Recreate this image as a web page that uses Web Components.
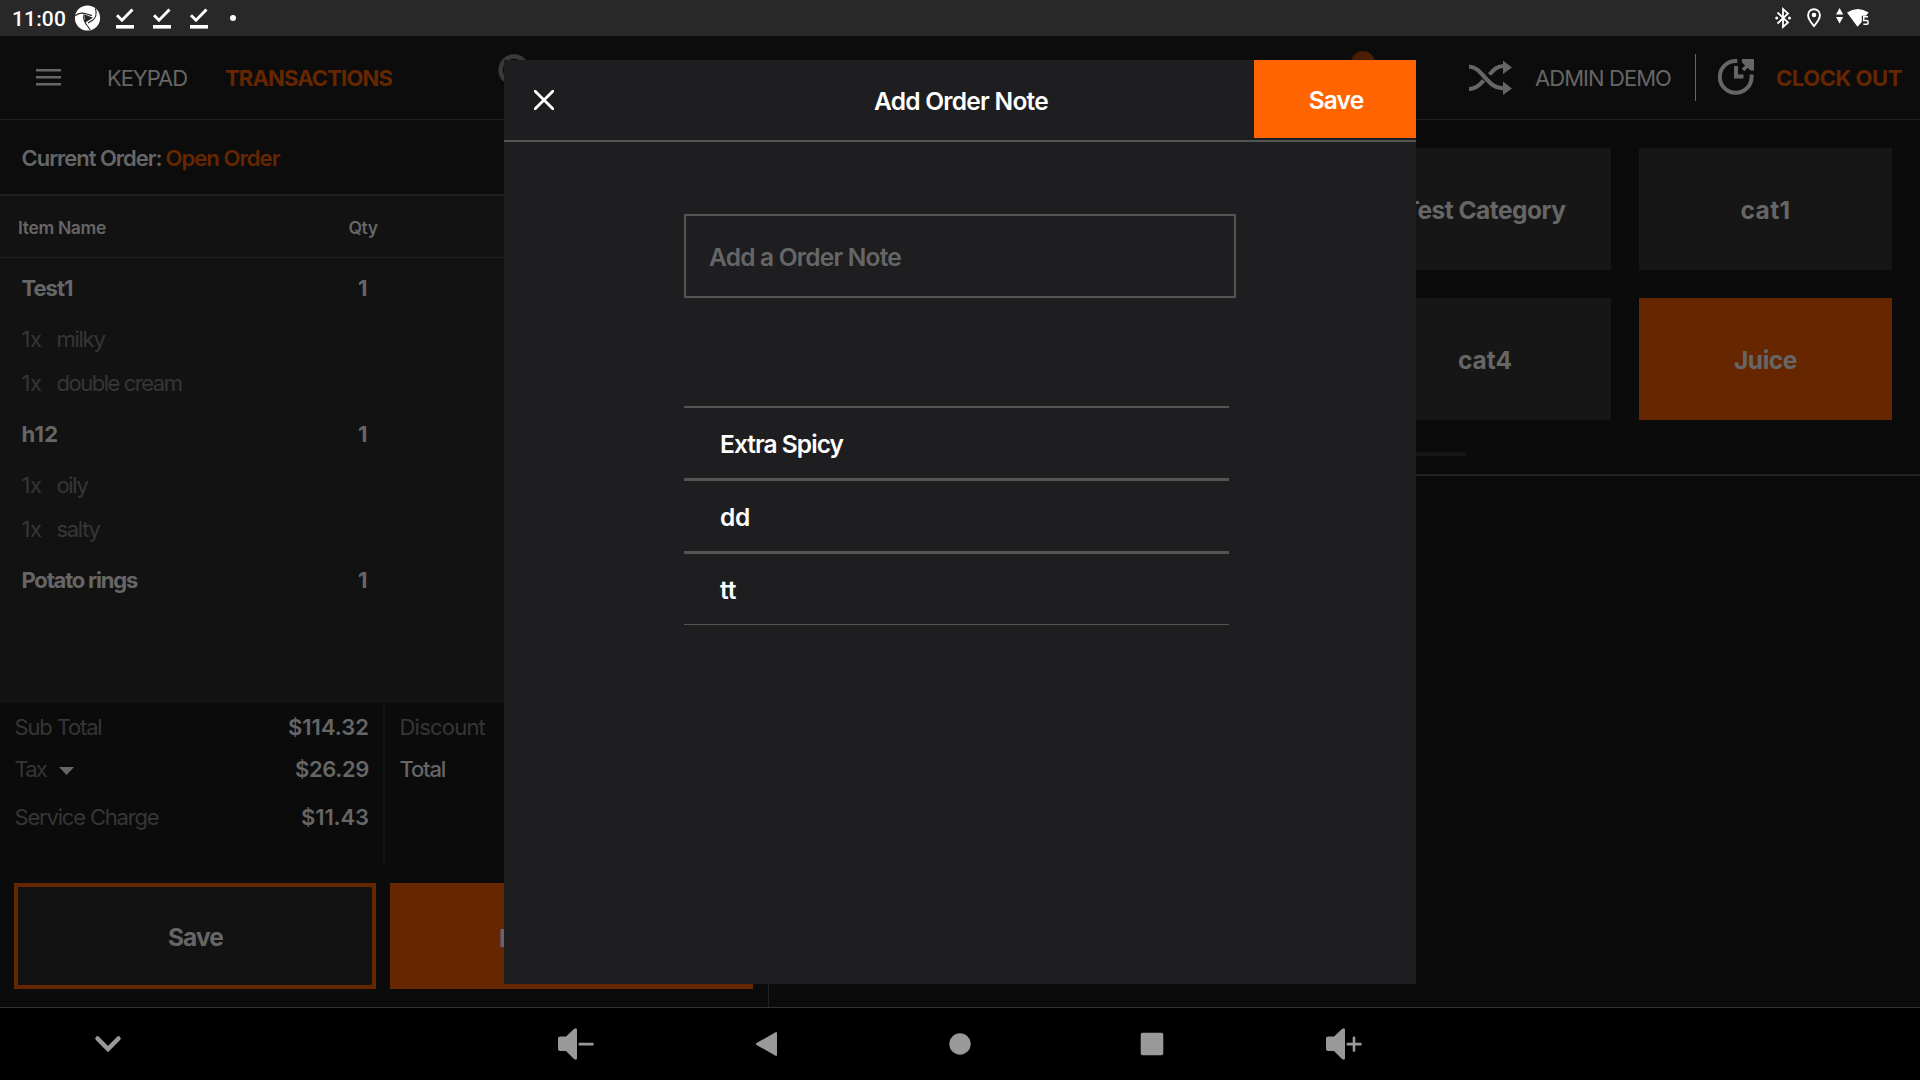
<!DOCTYPE html>
<html lang="en">
<head>
<meta charset="utf-8">
<title>Point of Sale</title>
<style>
html,body{margin:0;background:#000}
body{width:1920px;height:1080px;overflow:hidden;font-family:Inter,"Liberation Sans",sans-serif;font-size:22px;color:#666}
</style>
</head>
<body>
<pos-app></pos-app>
<script>
const define=(name,html,setup)=>{
  const t=document.createElement('template');
  t.innerHTML=html;
  customElements.define(name,class extends HTMLElement{
    connectedCallback(){
      if(this.shadowRoot)return;
      this.attachShadow({mode:'open'}).append(t.content.cloneNode(true));
      if(setup)setup(this,this.shadowRoot);
    }
  });
};

/* Single-line label whose tracking is tuned so that it spans a given advance width. */
define('fit-text','<style>:host{display:inline-block;white-space:pre;line-height:1.2;flex:none}span{display:inline-block}</style><span><slot></slot></span>',(el,root)=>{
  const w=parseFloat(el.getAttribute('w'));
  if(!w)return;
  const s=root.querySelector('span'),n=el.textContent.length;
  const ls=(w-s.getBoundingClientRect().width)/n;
  s.style.letterSpacing=ls.toFixed(3)+'px';
});

define('status-bar',`<style>
:host{display:flex;align-items:center;height:36px;background:#282828;color:#fff;box-sizing:border-box;padding-left:12px;font:500 21px Roboto,sans-serif}
.gap{flex:1}svg{display:block;flex:none}fit-text{padding-top:3px}
</style>
<fit-text w="54">11:00</fit-text>
<svg width="170" height="36" viewBox="66 0 170 36" fill="#fff">
<circle cx="87.5" cy="18" r="12.6"/>
<g fill="none" stroke="#282828" stroke-width="1.1"><path d="M75.2 15.800C78 13 82 12.600 86 13.800L92 15.600"/><path d="M95.400 8.500c1.500 5 .6 9-2.400 11.500l-5 3"/><path d="M83.800 14.500c-.8 4.500.8 8.500 4.500 12.500l2 3.300"/></g>
<path d="M84.300 14.200l8.700 3.600-8 5z" fill="#282828"/>
<g id="c"><path d="M117 15.200l5 5 10.500-10.800" fill="none" stroke="#fff" stroke-width="2.900"/><rect x="116" y="25" width="18" height="3.600"/></g>
<use href="#c" x="37"/><use href="#c" x="74"/>
<circle cx="233" cy="18" r="3"/>
</svg>
<span class="gap"></span>
<svg width="150" height="36" viewBox="1770 0 150 36" fill="#fff">
<path d="M1777.500 12.500l10.500 10-5 4.500V9l5 4.500-10.500 10" fill="none" stroke="#fff" stroke-width="1.800"/>
<circle cx="1776.700" cy="18" r="1.500"/><circle cx="1789.500" cy="18" r="1.500"/>
<path d="M1814 9.200a5.900 5.900 0 0 0-5.900 5.900c0 4.400 5.900 11 5.900 11s5.900-6.600 5.900-11a5.900 5.900 0 0 0-5.900-5.900z" fill="none" stroke="#fff" stroke-width="1.900"/><circle cx="1814" cy="15" r="2.300"/>
<path d="M1836 14.500l3.600-6.500 3.600 6.500zM1836 17l3.600 6.500 3.600-6.500z"/>
<path d="M1847 12.500q10.800-7.200 21.600 0l-2.600 3.200h-4.200v6.300l-4.300 4.700z"/>
<path d="M1868 16.800h-4.300v3.600h3.300q1 0 1 1v1.800q0 1-1 1h-3.600" fill="none" stroke="#fff" stroke-width="1.500"/>
</svg>`);

define('app-header',`<style>
:host{display:flex;align-items:center;height:84px;box-sizing:border-box;border-bottom:1px solid #222;background:#0c0c0c;padding:0 18px 0 36px}
svg{display:block;flex:none}.o{color:#662700}fit-text{padding-top:2px}
.k{margin-left:46px}.t{margin-left:38px;font-weight:700}
.search{margin:-16px 0 0 106px}.bell{margin:-29px 0 0 819px}
.gap{flex:1}.bar{width:1px;height:47px;background:#666;margin:-1px 22px 0 24px}
</style>
<svg width="25" height="17" viewBox="0 0 25 17" fill="#666"><path d="M0 0h25v2.600H0zM0 7h25v2.600H0zM0 14h25v2.600H0z"/></svg>
<fit-text class="k" w="80">KEYPAD</fit-text>
<fit-text class="t o" w="167">TRANSACTIONS</fit-text>
<svg class="search" width="34" height="34" viewBox="0 0 34 34"><circle cx="16" cy="17" r="13.400" fill="none" stroke="#3a3a3a" stroke-width="4.500"/></svg>
<svg class="bell" width="24" height="28" viewBox="0 0 24 28"><circle cx="12" cy="14" r="11.900" fill="#4b1d02"/></svg>
<span class="gap"></span>
<svg style="margin-right:22px" width="44" height="36" viewBox="1469 59 44 36"><g fill="none" stroke="#666" stroke-width="4.200"><path d="M1469 65.500c13 0 19 23 34 21.500"/><path d="M1469 88c6.500 0 10.500-3.500 14.600-8.500M1489.500 73.500c4.200-5 7.500-8.300 14.500-8.500"/></g><path d="M1503 59.500l9 7-9 6.500zM1503 80.500l9 7-9 6.500z" fill="#666"/></svg>
<fit-text w="136">ADMIN DEMO</fit-text>
<span class="bar"></span>
<svg style="margin-right:21px" width="37" height="37" viewBox="1718 59 37 37"><g fill="none" stroke="#666" stroke-width="4"><path d="M1737.300 61h-1.600a15.900 15.900 0 1 0 15.900 15.900v-2.400" /><path d="M1736 66v10.500h7.500" stroke-width="4"/><path d="M1743 70l7-7" stroke-width="3.500"/></g><path d="M1742 59h12v11.500h-3.500l-8.500-8z" fill="#666"/></svg>
<fit-text class="o" w="126" style="font-weight:650">CLOCK OUT</fit-text>`);

define('order-line',`<style>
:host{display:flex;height:44px;align-items:center;padding-left:21.500px;color:#363636;box-sizing:border-box}
:host([main]){height:58px;color:#666;font-weight:650}
</style><slot></slot>`);

define('sum-row',`<style>:host{display:flex;align-items:center;height:42px;color:#363636}:host([tall]){height:54px}
::slotted(b){font-weight:600;color:#666;margin-left:auto}::slotted(svg){margin:4px 0 0 13px}</style><slot></slot>`);

define('action-button',`<style>
:host{display:flex;align-items:center;justify-content:center;box-sizing:border-box;height:106px;border:4px solid #662700;background:#121212;font-weight:650;font-size:24.500px;padding-top:4px}
:host([filled]){background:#662700}
</style><slot></slot>`);

define('order-panel',`<style>
:host{display:flex;flex-direction:column;width:769px;box-sizing:border-box;border-right:1px solid #222;background:#0b0b0b}
.cur{height:76px;box-sizing:border-box;border-bottom:2px solid #222;display:flex;align-items:center;padding:2px 0 0 21.500px;font-weight:600;gap:4px;background:#0c0c0c}
.o{color:#662700}
.head{height:62px;box-sizing:border-box;border-bottom:1px solid #222;background:#121212;display:flex;align-items:center;padding:2px 0 0 18px;font-size:17.500px;font-weight:600}
.head .q{margin-left:242.500px}
.items{height:445px;box-sizing:border-box;background:#121212;padding-top:1px}
.one{margin-left:auto;width:410px}
.i{margin-left:15px}
.sums{display:flex;height:162px}
.a{border-right:2px solid #141414;padding:3px 14px 0 14.500px;width:354.500px}
.b{padding:3px 0 0 14.500px}.b .w{color:#666;font-weight:550}
.btns{display:flex;gap:14px;padding:18px 14px 0}
.btns>*{width:362px}
.btns>.pay{justify-content:flex-start;padding-left:105px;width:363px}
</style>
<div class="cur"><fit-text w="140">Current Order:</fit-text><fit-text class="o" w="114" style="font-weight:600">Open Order</fit-text></div>
<div class="head"><fit-text w="88">Item Name</fit-text><fit-text class="q" w="29">Qty</fit-text></div>
<div class="items">
<order-line main><fit-text w="51">Test1</fit-text><span class="one">1</span></order-line>
<order-line><fit-text w="20">1x</fit-text><fit-text class="i" w="48">milky</fit-text></order-line>
<order-line><fit-text w="20">1x</fit-text><fit-text class="i" w="125">double cream</fit-text></order-line>
<order-line main><fit-text w="37">h12</fit-text><span class="one">1</span></order-line>
<order-line><fit-text w="20">1x</fit-text><fit-text class="i" w="31">oily</fit-text></order-line>
<order-line><fit-text w="20">1x</fit-text><fit-text class="i" w="43">salty</fit-text></order-line>
<order-line main><fit-text w="115.500">Potato rings</fit-text><span class="one">1</span></order-line>
</div>
<div class="sums">
<div class="a">
<sum-row><fit-text w="87">Sub Total</fit-text><b><fit-text w="81">$114.32</fit-text></b></sum-row>
<sum-row><fit-text w="31.500">Tax</fit-text><svg width="15" height="8" viewBox="0 0 15 8" fill="#666"><path d="M0 0h15L7.500 8z"/></svg><b><fit-text w="74">$26.29</fit-text></b></sum-row>
<sum-row tall><fit-text w="144">Service Charge</fit-text><b><fit-text w="68">$11.43</fit-text></b></sum-row>
</div>
<div class="b"><sum-row><fit-text w="85.500">Discount</fit-text></sum-row><sum-row class="w"><fit-text w="45.500">Total</fit-text></sum-row></div>
</div>
<div class="btns"><action-button><fit-text w="55" style="padding-left:1px">Save</fit-text></action-button><action-button filled class="pay">P</action-button></div>`);

define('category-tile',`<style>
:host{display:flex;align-items:center;justify-content:center;height:122px;box-sizing:border-box;padding-top:4px;background:#161616;font-weight:700;font-size:24.500px}
:host([active]){background:#662700}
</style><slot></slot>`);

define('category-panel',`<style>
:host{display:block;flex:1;background:#0b0b0b}
.top{height:356px;box-sizing:border-box;border-bottom:2px solid #222;padding:28px 28px 0 27px}
.grid{display:grid;grid-template-columns:repeat(4,253px);gap:28px}
.bar{height:4px;width:670px;background:#161616;margin-top:32px}
</style>
<div class="top"><div class="grid">
<category-tile></category-tile><category-tile></category-tile>
<category-tile><fit-text w="162">Test Category</fit-text></category-tile>
<category-tile><fit-text w="50">cat1</fit-text></category-tile>
<category-tile></category-tile><category-tile></category-tile>
<category-tile><fit-text w="54" style="padding-left:1px">cat4</fit-text></category-tile>
<category-tile active><fit-text w="63">Juice</fit-text></category-tile>
</div><div class="bar"></div></div>`);

define('nav-bar',`<style>
:host{display:flex;height:73px;box-sizing:border-box;border-top:1px solid #333;background:#000}
svg{display:block}
</style>
<svg width="1920" height="72" viewBox="0 1008 1920 72" fill="#999">
<path d="M97.500 1038.500l10.500 10.500 10.500-10.500" fill="none" stroke="#999" stroke-width="4.500" stroke-linecap="round"/>
<g id="v"><path d="M560 1036.500h6l8-7.500q3-2 3 1v28q0 3-3 1l-8-8h-6q-2 0-2-2v-10.500q0-2 2-2z"/><rect x="578.500" y="1042.800" width="15.200" height="2.600" rx="1"/></g>
<path d="M776 1032q1 0 1 1v22q0 1-1 1l-19.500-11q-1-1 0-2z"/>
<circle cx="960" cy="1044" r="10.700"/>
<rect x="1140.700" y="1032.700" width="22.600" height="22.600" rx="2"/>
<use href="#v" x="768"/><rect x="1352.700" y="1036.500" width="2.600" height="15.200" rx="1"/>
</svg>`);

define('note-option',`<style>
:host{display:flex;align-items:center;height:73px;box-sizing:border-box;padding:4px 0 0 36px;border-bottom:3px solid #545454}
:host([last]){height:71px;border-bottom-width:1px}
</style><slot></slot>`);

define('note-dialog',`<style>
:host{display:block;position:absolute;left:504px;top:60px;width:912px;height:924px;background:#1e1e20;color:#fff;font-weight:625;font-size:24.500px}
header{height:82px;box-sizing:border-box;border-bottom:2px solid #545454;display:grid;grid-template-columns:162px 1fr 162px}
.x{padding:30px 0 0 30px}svg{display:block}
.title{display:flex;align-items:center;justify-content:center;padding:4px 0 0 2px}
.save{height:78px;box-sizing:border-box;padding:4px 0 0 2px;display:flex;align-items:center;justify-content:center;background:#ff6400}
.field{margin:72px 0 0 180px;width:552px;height:84px;box-sizing:border-box;border:2px solid #545454;padding:4px 0 0 23px;display:flex;align-items:center;color:#666;font-weight:600}
.list{margin:108px 0 0 180px;width:545px;border-top:2px solid #545454}
</style>
<header><span class="x"><svg width="20" height="20" viewBox="0 0 20 20"><path d="M1.200 1.200l17.600 17.600M18.800 1.200L1.200 18.800" stroke="#fff" stroke-width="2.800" stroke-linecap="round"/></svg></span>
<span class="title"><fit-text w="174">Add Order Note</fit-text></span>
<span class="save"><fit-text w="54.500">Save</fit-text></span></header>
<div class="field"><fit-text w="192">Add a Order Note</fit-text></div>
<div class="list"><note-option><fit-text w="123">Extra Spicy</fit-text></note-option><note-option><fit-text w="30">dd</fit-text></note-option><note-option last><fit-text w="16.500">tt</fit-text></note-option></div>`);

define('pos-app',`<style>
:host{display:flex;flex-direction:column;width:1920px;height:1080px;position:relative;overflow:hidden}
main{display:flex;height:887px}
</style>
<status-bar></status-bar><app-header></app-header>
<main><order-panel></order-panel><category-panel></category-panel></main>
<nav-bar></nav-bar><note-dialog></note-dialog>`);
</script>
</body>
</html>
